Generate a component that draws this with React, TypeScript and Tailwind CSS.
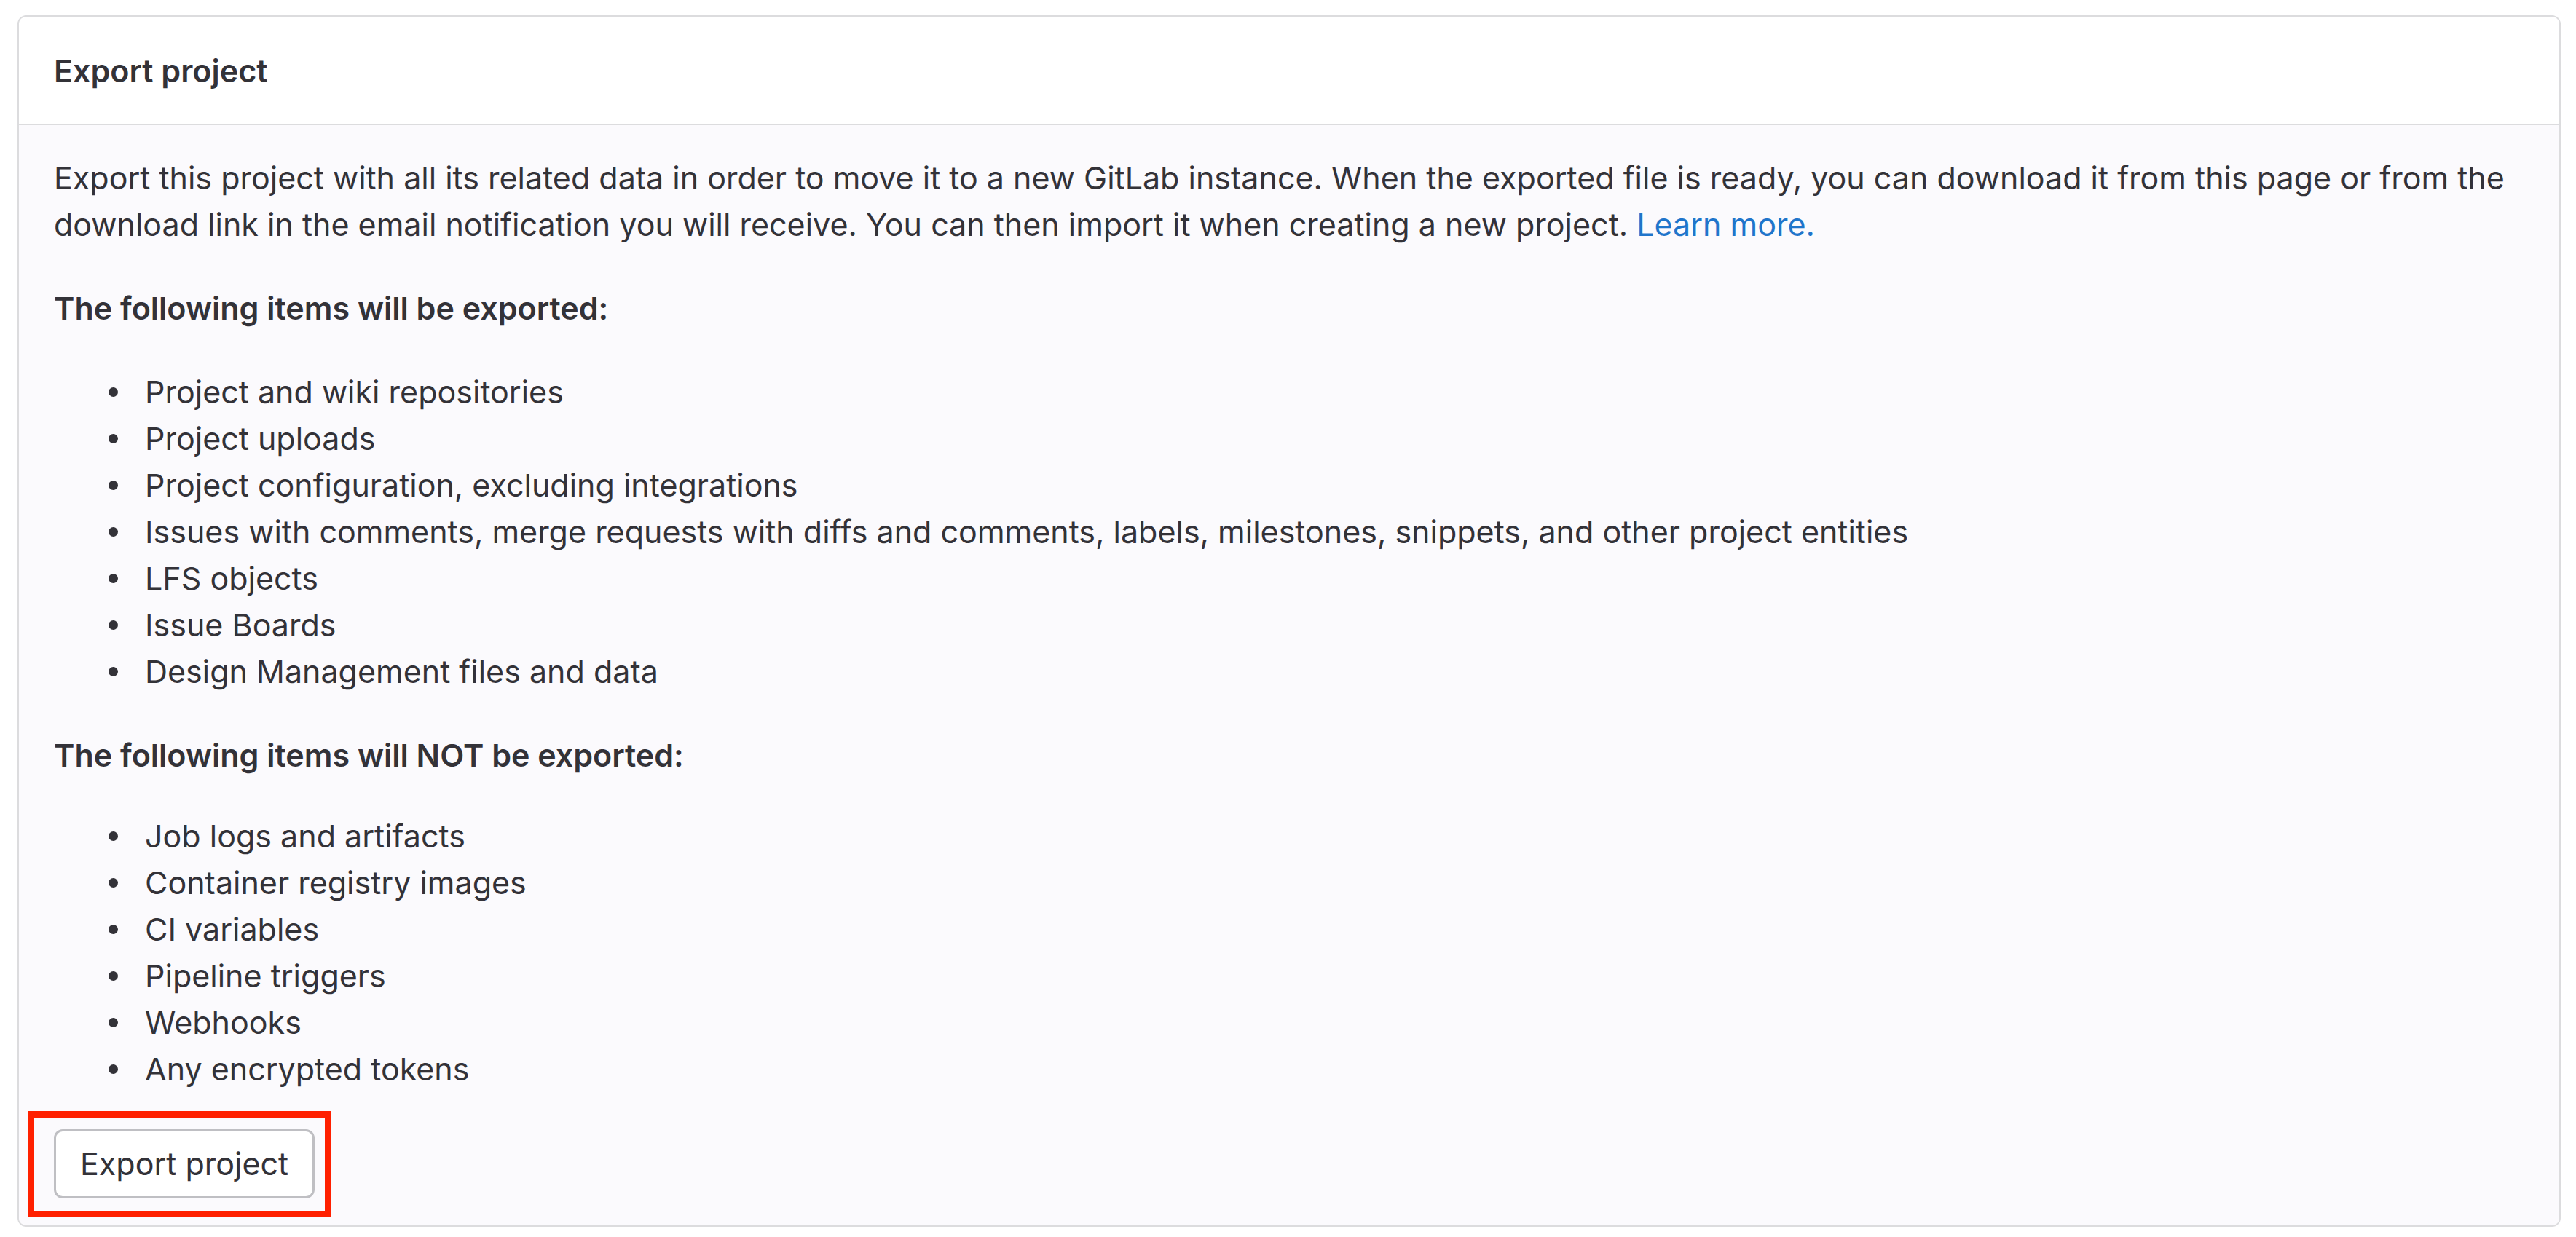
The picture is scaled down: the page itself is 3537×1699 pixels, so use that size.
import React from 'react';

const exported = [
  'Project and wiki repositories',
  'Project uploads',
  'Project configuration, excluding integrations',
  'Issues with comments, merge requests with diffs and comments, labels, milestones, snippets, and other project entities',
  'LFS objects',
  'Issue Boards',
  'Design Management files and data',
];

const notExported = [
  'Job logs and artifacts',
  'Container registry images',
  'CI variables',
  'Pipeline triggers',
  'Webhooks',
  'Any encrypted tokens',
];

const ItemList: React.FC<{ items: string[] }> = ({ items }) => (
  <ul className="pl-[75px] mb-[51px]">
    {items.map((item) => (
      <li key={item} className="flex items-center leading-[64px]">
        <span className="w-[13px] h-[13px] mr-[37px] shrink-0 rounded-full bg-[#333238]" />
        <span>{item}</span>
      </li>
    ))}
  </ul>
);

export default function App() {
  return (
    <div className="min-h-screen bg-white pt-[21px] pl-[24px] font-['Inter',sans-serif] text-[43px] text-[#333238]">
      <div className="w-[3492px] rounded-[12px] border-2 border-[#dcdcde] overflow-hidden">
        {/* Header */}
        <div className="h-[149px] flex items-center px-[48px] bg-white border-b-2 border-[#dcdcde]">
          <h4 className="font-semibold leading-[64px]">Export project</h4>
        </div>

        {/* Body */}
        <div className="bg-[#fbfafd] pt-[40px] px-[48px] pb-[37px]">
          <p className="leading-[64px] mb-[51px]">
            Export this project with all its related data in order to move it to a new GitLab instance. When the
            exported file is ready, you can download it from this page or from the download link in the email
            notification you will receive. You can then import it when creating a new project.{' '}
            <a href="#" className="text-[#1f75cb]">
              Learn more.
            </a>
          </p>

          <p className="font-semibold leading-[64px] mb-[51px]">The following items will be exported:</p>
          <ItemList items={exported} />

          <p className="font-semibold leading-[64px] mb-[47px]">The following items will NOT be exported:</p>
          <ItemList items={notExported} />

          <div className="relative inline-block">
            <button
              type="button"
              className="h-[95px] px-[33px] bg-white border-[3px] border-[#bfbfc3] rounded-[12px] text-[#333238] leading-none"
            >
              Export project
            </button>
            {/* Annotation box */}
            <span className="absolute -left-[36px] -right-[23px] -top-[25px] -bottom-[26px] border-[9px] border-[#ff2000] pointer-events-none" />
          </div>
        </div>
      </div>
    </div>
  );
}
